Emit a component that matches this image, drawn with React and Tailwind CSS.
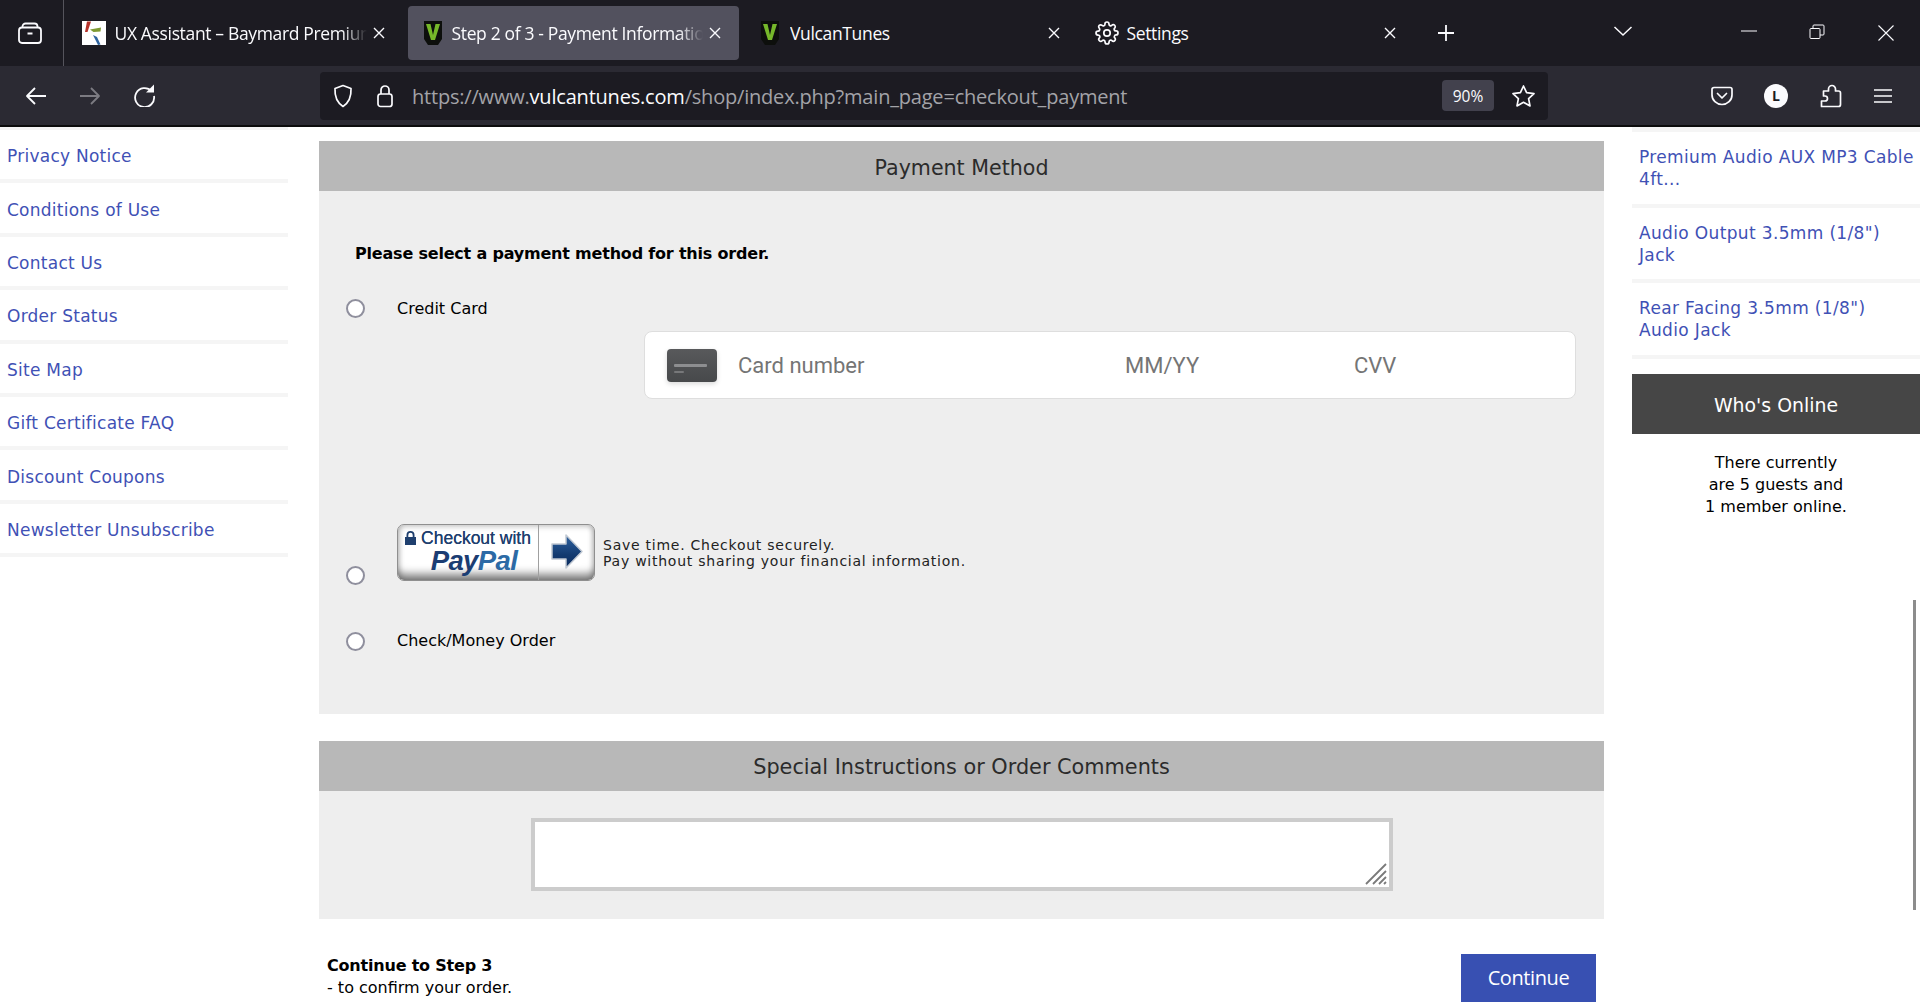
import React from "react";

const UI = "font-['Open_Sans','Noto_Sans',sans-serif]";
const PAGE = "font-['DejaVu_Sans','Liberation_Sans',sans-serif]";

function X({ className = "" }) {
  return (
    <svg width="14" height="14" viewBox="0 0 14 14" className={className} fill="none" stroke="#fbfbfe" strokeWidth="1.4">
      <path d="M2 2l10 10M12 2L2 12" />
    </svg>
  );
}

function VIcon() {
  return (
    <svg width="18" height="24" viewBox="0 0 18 24" className="shrink-0">
      <path d="M0 0h18v18l-4 6H4l-4-6z" fill="#0d0f0c" />
      <path d="M2 3h4.500L9 14l2.500-11H16l-5 16H7z" fill="#76b82a" />
    </svg>
  );
}

function BaymardIcon() {
  return (
    <svg width="24" height="24" viewBox="0 0 24 24" className="shrink-0">
      <rect width="24" height="24" fill="#fff" />
      <path d="M5 0.500h4L5.500 11H3z" fill="#b5322a" />
      <path d="M8 8.500l11-2-.5 4-7 .5z" fill="#7f9a32" />
      <path d="M11 14l4 2 3.500 7.500-2.500.5z" fill="#2f64a0" />
    </svg>
  );
}

function Tab({ icon, title, active, width, iconLeft, textGap, textWidth, closeRight, fade }) {
  return (
    <div className={`flex items-center h-[54px] rounded-[4px] shrink-0 ${active ? "bg-[#52515e]" : ""}`} style={{ width }}>
      <span className="w-[24px] flex justify-center shrink-0" style={{ marginLeft: iconLeft }}>{icon}</span>
      <span className={`text-[17.500px] tracking-[-0.35px] text-[#fbfbfe] whitespace-nowrap overflow-hidden ${fade ? "[mask-image:linear-gradient(to_right,black_90%,transparent)]" : ""}`} style={{ width: textWidth, marginLeft: textGap }}>
        {title}
      </span>
      <span className="ml-auto shrink-0 flex" style={{ marginRight: closeRight }}><X /></span>
    </div>
  );
}

function TabBar() {
  return (
    <div className={`h-[66px] bg-[#1c1b22] flex items-center ${UI} shrink-0`}>
      <div className="w-[64px] h-full flex items-center border-r border-[#55545c] shrink-0">
        <svg width="24" height="24" viewBox="0 0 24 24" className="ml-[18px]" fill="none" stroke="#fbfbfe" strokeWidth="1.800">
          <rect x="1" y="6.500" width="22" height="15.500" rx="3" />
          <path d="M4.500 6.500V5.500a3 3 0 0 1 3-3h9a3 3 0 0 1 3 3v1" />
          <path d="M9.500 12.500h5" strokeWidth="2" />
        </svg>
      </div>
      <div className="ml-[2px]"><Tab icon={<BaymardIcon />} title="UX Assistant – Baymard Premium" width="336px" iconLeft="15.500px" textGap="9px" textWidth="252px" closeRight="16px" fade /></div>
      <div className="ml-[6px]"><Tab icon={<VIcon />} title="Step 2 of 3 - Payment Information" active width="331px" iconLeft="13px" textGap="6.500px" textWidth="251px" closeRight="17px" fade /></div>
      <div className="ml-[6px]"><Tab icon={<VIcon />} title="VulcanTunes" width="320px" iconLeft="13px" textGap="8px" textWidth="200px" closeRight="4.500px" /></div>
      <div className="ml-[13px] w-[320px] flex items-center h-[54px] shrink-0">
        <svg width="24" height="24" viewBox="0 0 24 24" className="ml-[16.500px]" fill="none" stroke="#fbfbfe" strokeWidth="1.700" strokeLinejoin="round">
          <circle cx="12" cy="12" r="3.200" />
          <path d="M19.400 15a1.650 1.650 0 0 0 .33 1.820l.06.06a2 2 0 1 1-2.830 2.830l-.06-.06a1.650 1.650 0 0 0-2.820 1.170V21a2 2 0 1 1-4 0v-.09A1.650 1.650 0 0 0 7.270 19.700l-.06.06a2 2 0 1 1-2.830-2.830l.06-.06a1.650 1.650 0 0 0-1.170-2.820H3a2 2 0 1 1 0-4h.09A1.650 1.650 0 0 0 4.300 7.270l-.06-.06a2 2 0 1 1 2.830-2.830l.06.06a1.650 1.650 0 0 0 2.820-1.170V3a2 2 0 1 1 4 0v.09a1.650 1.650 0 0 0 2.820 1.210l.06-.06a2 2 0 1 1 2.830 2.830l-.06.06a1.650 1.650 0 0 0 1.170 2.820H21a2 2 0 1 1 0 4h-.09a1.650 1.650 0 0 0-1.510 1.050z" />
        </svg>
        <span className="ml-[8px] text-[17.500px] tracking-[-0.35px] text-[#fbfbfe]">Settings</span>
        <X className="ml-auto mr-[1px]" />
      </div>
      <svg width="20" height="20" viewBox="0 0 20 20" className="ml-[38px]" stroke="#fbfbfe" strokeWidth="1.800">
        <path d="M10 2v16M2 10h16" />
      </svg>
      <svg width="20" height="12" viewBox="0 0 20 12" className="ml-[157px] mb-[4px]" fill="none" stroke="#fbfbfe" strokeWidth="1.500">
        <path d="M1.500 2l8.500 8 8.500-8" />
      </svg>
      <svg width="16" height="2" viewBox="0 0 16 2" className="ml-[108px] mb-[4px]" stroke="#fbfbfe" strokeWidth="1">
        <path d="M0 1h16" />
      </svg>
      <svg width="16" height="16" viewBox="0 0 16 16" className="ml-[52px] mb-[2px]" fill="none" stroke="#fbfbfe" strokeWidth="1">
        <rect x="1" y="4.500" width="10" height="10" rx="1" />
        <path d="M4 4.500V2a1 1 0 0 1 1-1h9a1 1 0 0 1 1 1v8a1 1 0 0 1-1 1h-3" />
      </svg>
      <svg width="16" height="16" viewBox="0 0 16 16" className="ml-[53px]" stroke="#fbfbfe" strokeWidth="1.100">
        <path d="M0.500 0.500l15 15M15.500 0.500l-15 15" />
      </svg>
    </div>
  );
}

function NavBar() {
  return (
    <div className={`h-[59px] bg-[#2b2a33] flex items-center ${UI} shrink-0 border-b-0`}>
      <svg width="22" height="20" viewBox="0 0 22 20" className="ml-[25px]" fill="none" stroke="#fbfbfe" strokeWidth="1.800" strokeLinejoin="round">
        <path d="M21 10H2M10 2l-8 8 8 8" />
      </svg>
      <svg width="22" height="20" viewBox="0 0 22 20" className="ml-[32px]" fill="none" stroke="#7c7b82" strokeWidth="1.800" strokeLinejoin="round">
        <path d="M1 10h19M12 2l8 8-8 8" />
      </svg>
      <svg width="24" height="24" viewBox="0 0 24 24" className="ml-[31px] mb-[2px]" fill="none" stroke="#fbfbfe" strokeWidth="1.800">
        <path d="M19.500 8A9.500 9.500 0 1 0 22 13" />
        <path d="M22 1.500v8h-8z" fill="#fbfbfe" stroke="none" />
      </svg>
      <div className="ml-[164px] w-[1228px] h-[48px] bg-[#1c1b22] rounded-[4px] flex items-center shrink-0">
        <svg width="20" height="24" viewBox="0 0 20 24" className="ml-[13px]" fill="none" stroke="#fbfbfe" strokeWidth="1.700" strokeLinejoin="round">
          <path d="M10 1.500l8 3c.5 9-2 14-8 18-6-4-8.500-9-8-18z" />
        </svg>
        <svg width="18" height="24" viewBox="0 0 18 24" className="ml-[22.500px]" fill="none" stroke="#fbfbfe" strokeWidth="1.700">
          <rect x="2" y="10" width="14" height="12.500" rx="2.500" />
          <path d="M5 10V6a4 4 0 0 1 8 0v4" />
        </svg>
        <span className="ml-[18.500px] pt-[3px] text-[20px] tracking-[-0.2px] text-[#a3a3a8] whitespace-nowrap w-[1048px] shrink-0">
          https://www.<span className="text-[#fbfbfe]">vulcantunes.com</span>/shop/index.php?main_page=checkout_payment
        </span>
        <span className="w-[52px] h-[31px] pt-[3px] rounded-[4px] bg-[#42414d] text-[#fbfbfe] text-[15.500px] flex items-center justify-center shrink-0 -ml-[18px]">90%</span>
        <svg width="25" height="24" viewBox="0 0 25 24" className="ml-[17px] shrink-0" fill="none" stroke="#fbfbfe" strokeWidth="1.700" strokeLinejoin="round">
          <path d="M12.500 2l3.100 6.700 7.400.9-5.400 5 1.400 7.300-6.500-3.600-6.500 3.600 1.400-7.300-5.400-5 7.400-.9z" />
        </svg>
      </div>
      <svg width="22" height="20" viewBox="0 0 22 20" className="ml-[163px]" fill="none" stroke="#fbfbfe" strokeWidth="1.700" strokeLinejoin="round">
        <path d="M3 1.500h16a2 2 0 0 1 2 2V9a10 9.500 0 0 1-20 0V3.500a2 2 0 0 1 2-2z" />
        <path d="M6.500 7.500L11 12l4.500-4.500" strokeLinecap="round" />
      </svg>
      <span className="ml-[31px] w-[24px] h-[24px] rounded-full bg-[#fbfbfe] text-[#1c1b22] text-[14px] font-bold flex items-center justify-center">L</span>
      <svg width="22" height="24" viewBox="0 0 22 24" className="ml-[32px]" fill="none" stroke="#fbfbfe" strokeWidth="1.700" strokeLinejoin="round">
        <path d="M1.500 22.500h17a2 2 0 0 0 2-2V9a2 2 0 0 0-2-2h-3V5a3.500 3.500 0 0 0-7 0v2h-5v5H5a2.200 2.200 0 0 1 0 5H1.500z" />
      </svg>
      <svg width="18" height="16" viewBox="0 0 18 16" className="ml-[32px]" stroke="#fbfbfe" strokeWidth="1.700">
        <path d="M0 2h18M0 8h18M0 14h18" />
      </svg>
    </div>
  );
}

const leftLinks = ["Privacy Notice", "Conditions of Use", "Contact Us", "Order Status", "Site Map", "Gift Certificate FAQ", "Discount Coupons", "Newsletter Unsubscribe"];

function LeftCol() {
  return (
    <div className={`w-[288px] shrink-0 ${PAGE}`}>
      <div className="h-[3px] bg-[#f5f5f5]" />
      {leftLinks.map((l) => (
        <div key={l} className="h-[53.400px] border-b-[4px] border-[#f5f5f5] flex items-center pl-[7px] text-[#3f51b5] text-[17px] tracking-[0.25px] leading-[20px] pt-[3px]">
          {l}
        </div>
      ))}
    </div>
  );
}

function Radio() {
  return <span className="block w-[19px] h-[19px] rounded-full bg-white border-[2px] border-[#8f8f9d] shrink-0" />;
}

function PayPalButton() {
  return (
    <div className="w-[198px] h-[57px] rounded-[7px] border border-[#8f8f8f] flex overflow-hidden bg-white shadow-[inset_0_-9px_8px_-3px_rgba(0,0,0,0.5),inset_0_3px_5px_rgba(0,0,0,0.12),inset_3px_0_4px_rgba(0,0,0,0.08),inset_-3px_0_4px_rgba(0,0,0,0.08)] shrink-0 font-['Liberation_Sans',sans-serif]">
      <div className="w-[141px] border-r border-[#a0a0a0] flex flex-col items-center">
        <div className="flex items-center gap-[5px] mt-[3px] text-[#1f3f6e] text-[17.500px] leading-[20px] [text-shadow:0_0_0.6px_#1f3f6e] whitespace-nowrap">
          <svg width="11" height="14" viewBox="0 0 11 14" fill="#1f3f6e">
            <path d="M1.500 6V4a4 4 0 0 1 8 0v2h1.500v8H0V6zm1.800 0h4.400V4a2.200 2.200 0 0 0-4.400 0z" />
          </svg>
          Checkout with
        </div>
        <div className="ml-[12px] italic font-bold text-[27.500px] leading-[26px] tracking-[-0.6px] whitespace-nowrap">
          <span className="text-[#1b3d73]">Pay</span>
          <span className="text-[#2c6aa5]">Pal</span>
        </div>
      </div>
      <div className="flex-1 flex items-center justify-center pb-[3px]">
        <svg width="34" height="37" viewBox="0 0 34 37">
          <defs>
            <linearGradient id="pp" x1="0" y1="0" x2="0" y2="1">
              <stop offset="0" stopColor="#2f62a0" />
              <stop offset="0.6" stopColor="#123a70" />
              <stop offset="1" stopColor="#0c2c5e" />
            </linearGradient>
          </defs>
          <path d="M2 11h14V2l16 16.500L16 35v-9H2z" fill="url(#pp)" stroke="#c0c8d2" strokeWidth="1.500" strokeLinejoin="round" />
        </svg>
      </div>
    </div>
  );
}

function CardField() {
  return (
    <div className="ml-[325px] w-[932px] h-[68px] bg-white rounded-[8px] border border-[#dedede] flex items-center font-['Roboto',sans-serif] text-[#757575] text-[22px]">
      <div className="ml-[22px] w-[50px] h-[33px] rounded-[4px] bg-[linear-gradient(to_bottom,#58595b,#47494b)] shadow-[0_2px_5px_rgba(0,0,0,0.15)] flex flex-col justify-center pl-[7px] gap-[4px] pt-[6px] shrink-0">
        <span className="block w-[33px] h-[3px] bg-[#8d8e90] rounded-[1px]" />
        <span className="block w-[10px] h-[2px] bg-[#77787a] rounded-[1px]" />
      </div>
      <span className="ml-[21px] w-[387px] shrink-0">Card number</span>
      <span className="w-[229px] shrink-0">MM/YY</span>
      <span>CVV</span>
    </div>
  );
}

function PaymentPanel() {
  return (
    <section className="bg-[#eeeeee] h-[573px]">
      <h2 className="h-[50px] pt-[4px] bg-[#b8b8b8] flex items-center justify-center text-[20.600px] font-normal text-[#2b2b2b]">Payment Method</h2>
      <p className="ml-[36px] mt-[53px] font-bold text-[16px] leading-[20px] text-black tracking-[-0.2px]">Please select a payment method for this order.</p>
      <div className="flex items-center ml-[27px] mt-[34px] h-[20px]">
        <Radio />
        <span className="ml-[32px] pt-[1px] text-[16px] text-black">Credit Card</span>
      </div>
      <div className="mt-[13px]"><CardField /></div>
      <div className="flex ml-[27px] mt-[125px] h-[60px]">
        <div className="self-end -mb-[1px]"><Radio /></div>
        <div className="ml-[32px]"><PayPalButton /></div>
        <p className="ml-[8px] mt-[13px] text-[14px] leading-[16px] tracking-[0.75px] text-[#222] whitespace-nowrap">
          Save time. Checkout securely.<br />Pay without sharing your financial information.
        </p>
      </div>
      <div className="flex items-center ml-[27px] mt-[47px] h-[20px]">
        <Radio />
        <span className="ml-[32px] text-[16px] text-black">Check/Money Order</span>
      </div>
    </section>
  );
}

function CommentsPanel() {
  return (
    <section className="mt-[27px] bg-[#eeeeee] h-[178px]">
      <h2 className="h-[50px] pt-[3px] bg-[#b8b8b8] flex items-center justify-center text-[20.800px] font-normal text-[#2b2b2b]">Special Instructions or Order Comments</h2>
      <div className="mt-[27px] ml-[212px] w-[862px] h-[73px] bg-white border-[4px] border-[#cccccc] relative">
        <svg width="22" height="22" viewBox="0 0 22 22" className="absolute right-[2px] bottom-[2px]" stroke="#7a7a7a" strokeWidth="1.800">
          <path d="M1 21L21 1M8 21L21 8M14 21l7-7M19 21l2-2" />
        </svg>
      </div>
    </section>
  );
}

function MainCol() {
  return (
    <div className={`ml-[31px] w-[1285px] shrink-0 pt-[14px] ${PAGE}`}>
      <PaymentPanel />
      <CommentsPanel />
      <div className="flex justify-between items-start mt-[35px] pl-[8px] pr-[8px]">
        <div className="text-[16px] leading-[22px] text-black pt-[1px]">
          <div className="font-bold tracking-[-0.2px]">Continue to Step 3</div>
          <div>- to confirm your order.</div>
        </div>
        <button className={`w-[135px] h-[48px] bg-[#3850b2] text-white text-[20px] tracking-[-0.4px] ${UI}`}>Continue</button>
      </div>
    </div>
  );
}

const rightLinks = [
  ["Premium Audio AUX MP3 Cable", "4ft..."],
  ['Audio Output 3.5mm (1/8")', "Jack"],
  ['Rear Facing 3.5mm (1/8")', "Audio Jack"],
];

function RightCol() {
  return (
    <div className={`ml-[28px] w-[288px] shrink-0 relative ${PAGE}`}>
      <div className="h-[5px] bg-[#f5f5f5]" />
      {rightLinks.map((l) => (
        <div key={l[0]} className="h-[75.700px] border-b-[4px] border-[#f5f5f5] pl-[7px] pt-[14px] text-[#3f51b5] text-[17px] tracking-[0.35px] leading-[22px] whitespace-nowrap">
          {l[0]}<br />{l[1]}
        </div>
      ))}
      <div className="mt-[15px] h-[60px] pt-[2px] bg-[#464646] text-white text-[18.900px] flex items-center justify-center">Who's Online</div>
      <p className="mt-[18px] text-center text-[16px] leading-[22px] text-black">
        There currently<br />are 5 guests and<br />1 member online.
      </p>
      <span className="absolute right-[4px] top-[473px] block w-[3px] h-[310px] bg-[#8c8c8c]" />
    </div>
  );
}

export default function App() {
  return (
    <div className="w-[1920px] h-[1008px] overflow-hidden flex flex-col bg-white">
      <TabBar />
      <NavBar />
      <div className="h-[2px] bg-[#0c0c0d] shrink-0" />
      <div className="flex-1 flex overflow-hidden">
        <LeftCol />
        <MainCol />
        <RightCol />
      </div>
    </div>
  );
}
